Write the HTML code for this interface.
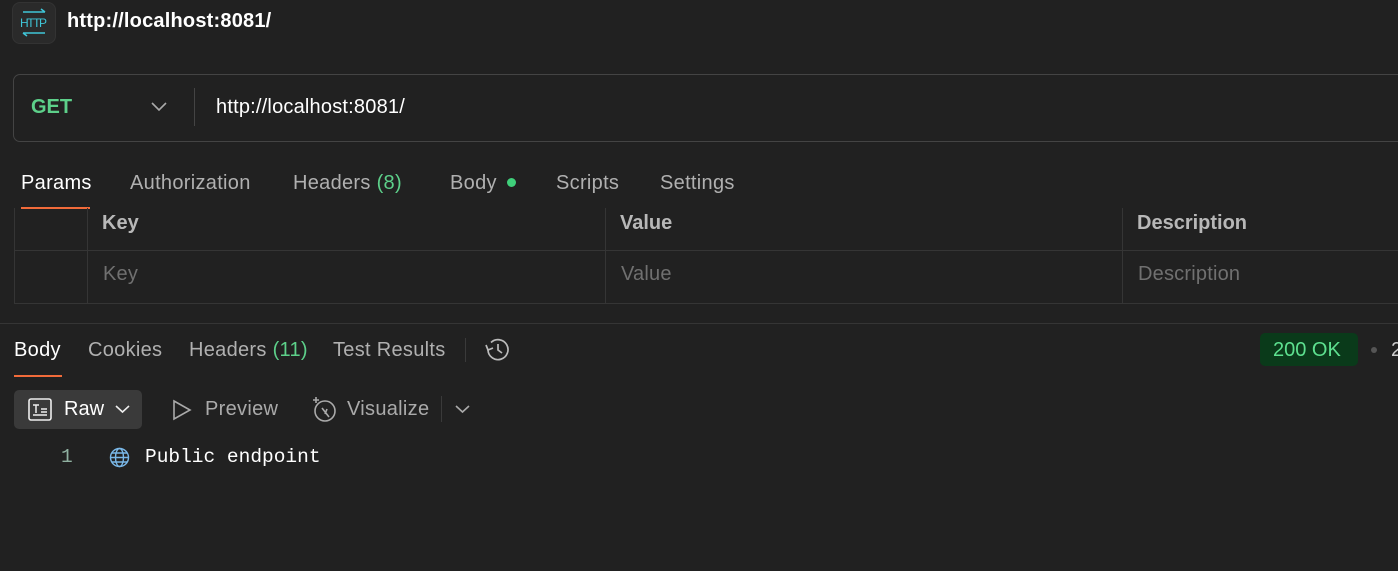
<!DOCTYPE html>
<html><head><style>
body{margin:0;width:1398px;height:571px;background:#212121;font-family:"Liberation Sans",sans-serif;color:#e8e8e8;position:relative;overflow:hidden}
.a{position:absolute;white-space:nowrap}
.tab{font-size:20px;letter-spacing:0.3px;color:#b0b0b0;top:172px}
.tab2{font-size:20px;letter-spacing:0.3px;color:#b0b0b0;top:339px}
.line{position:absolute;background:#353535}
</style></head><body>
<div class="a" style="left:12px;top:2px;width:42px;height:40px;border-radius:8px;background:#2a2a2a;border:1px solid #333"></div>
<svg class="a" style="left:18px;top:8px" width="32" height="30" viewBox="0 0 32 30"><g stroke="#3fc6d8" stroke-width="1.5" fill="none"><path d="M5 4H27M23 1L27 4"/><path d="M5 25H27M5 25L9 28"/></g><text x="2" y="19" font-size="12" fill="#3fc6d8" font-family="Liberation Sans" textLength="27">HTTP</text></svg>
<div class="a" style="left:67px;top:10px;font-size:20px;letter-spacing:0.2px;font-weight:bold;color:#fff">http://localhost:8081/</div>
<div class="a" style="left:13px;top:74px;width:1400px;height:66px;border:1px solid #444;border-radius:7px"></div>
<div class="a" style="left:31px;top:96px;font-size:20px;font-weight:bold;color:#5dd08a">GET</div>
<svg class="a" style="left:151px;top:102px" width="16" height="10"><path d="M1 1L8 8L15 1" stroke="#aaa" stroke-width="1.6" fill="none"/></svg>
<div class="line" style="left:194px;top:88px;width:1px;height:38px;background:#444"></div>
<div class="a" style="left:216px;top:96px;font-size:20px;letter-spacing:0.2px;color:#fff">http://localhost:8081/</div>
<div class="a tab" style="left:21px;color:#fff">Params</div>
<div class="line" style="left:21px;top:207px;width:69px;height:2px;background:#f26b3a"></div>
<div class="a tab" style="left:130px">Authorization</div>
<div class="a tab" style="left:293px">Headers <span style="color:#5dd08a">(8)</span></div>
<div class="a tab" style="left:450px">Body</div>
<div class="a" style="left:507px;top:178px;width:9px;height:9px;border-radius:50%;background:#3fcf7a"></div>
<div class="a tab" style="left:556px">Scripts</div>
<div class="a tab" style="left:660px">Settings</div>
<div class="line" style="left:14px;top:208px;width:1px;height:96px"></div>
<div class="line" style="left:87px;top:208px;width:1px;height:96px"></div>
<div class="line" style="left:605px;top:208px;width:1px;height:96px"></div>
<div class="line" style="left:1122px;top:208px;width:1px;height:96px"></div>
<div class="line" style="left:14px;top:250px;width:1384px;height:1px"></div>
<div class="line" style="left:14px;top:303px;width:1384px;height:1px"></div>
<div class="line" style="left:0;top:323px;width:1398px;height:1px"></div>
<div class="a" style="left:102px;top:212px;font-size:20px;font-weight:bold;color:#b8b8b8">Key</div>
<div class="a" style="left:620px;top:212px;font-size:20px;font-weight:bold;color:#b8b8b8">Value</div>
<div class="a" style="left:1137px;top:212px;font-size:20px;font-weight:bold;color:#b8b8b8">Description</div>
<div class="a" style="left:103px;top:263px;font-size:20px;letter-spacing:0.2px;color:#707070">Key</div>
<div class="a" style="left:621px;top:263px;font-size:20px;letter-spacing:0.2px;color:#707070">Value</div>
<div class="a" style="left:1138px;top:263px;font-size:20px;letter-spacing:0.2px;color:#707070">Description</div>
<div class="a tab2" style="left:14px;color:#fff">Body</div>
<div class="line" style="left:14px;top:375px;width:48px;height:2px;background:#f26b3a"></div>
<div class="a tab2" style="left:88px">Cookies</div>
<div class="a tab2" style="left:189px">Headers <span style="color:#5dd08a">(11)</span></div>
<div class="a tab2" style="left:333px">Test Results</div>
<div class="line" style="left:465px;top:338px;width:1px;height:24px;background:#3a3a3a"></div>
<svg class="a" style="left:484px;top:337px" width="28" height="26" viewBox="0 0 28 26"><g stroke="#bbb" stroke-width="1.7" fill="none"><path d="M4 13A10 10 0 1 0 7 5.5"/><path d="M2 8L4 13L9 11"/><path d="M14 7V13L18 16"/></g></svg>
<div class="a" style="left:1260px;top:333px;width:98px;height:33px;border-radius:5px;background:#0a3a1a"></div>
<div class="a" style="left:1273px;top:339px;font-size:20px;color:#5de08f">200 OK</div>
<div class="a" style="left:1371px;top:347px;width:6px;height:6px;border-radius:50%;background:#555"></div>
<div class="a" style="left:1391px;top:339px;font-size:20px;color:#ccc">2</div>
<div class="a" style="left:14px;top:390px;width:128px;height:39px;border-radius:5px;background:#3a3a3a"></div>
<svg class="a" style="left:28px;top:398px" width="25" height="24"><rect x="1" y="1" width="22" height="21" rx="2" stroke="#eee" stroke-width="1.6" fill="none"/><path d="M5 7H11M8 7V15M5 17H19M13 11H19M13 14H19" stroke="#eee" stroke-width="1.5"/></svg>
<div class="a" style="left:64px;top:398px;font-size:20px;color:#fff">Raw</div>
<svg class="a" style="left:115px;top:405px" width="15" height="10"><path d="M1 1L7.5 7L14 1" stroke="#eee" stroke-width="1.6" fill="none"/></svg>
<svg class="a" style="left:172px;top:399px" width="20" height="22"><path d="M2 2L18 11L2 20Z" stroke="#aaa" stroke-width="1.6" fill="none"/></svg>
<div class="a" style="left:205px;top:398px;font-size:20px;letter-spacing:0.3px;color:#aaa">Preview</div>
<svg class="a" style="left:310px;top:396px" width="28" height="27"><g stroke="#aaa" stroke-width="1.6" fill="none"><circle cx="15" cy="15" r="10"/><path d="M12 12L19 21M17 13L15 18"/><path d="M6 1V7M3 4H9"/></g></svg>
<div class="a" style="left:347px;top:398px;font-size:20px;letter-spacing:0.3px;color:#aaa">Visualize</div>
<div class="line" style="left:441px;top:396px;width:1px;height:26px;background:#3a3a3a"></div>
<svg class="a" style="left:455px;top:405px" width="15" height="10"><path d="M1 1L7.5 7L14 1" stroke="#aaa" stroke-width="1.6" fill="none"/></svg>
<div class="a" style="left:61px;top:446px;font-size:19.5px;font-family:'Liberation Mono',monospace;color:#8fb0a0">1</div>
<svg class="a" style="left:109px;top:447px" width="21" height="21" viewBox="0 0 21 21"><g stroke="#7ab8e8" stroke-width="1.4" fill="none"><circle cx="10.5" cy="10.5" r="9"/><ellipse cx="10.5" cy="10.5" rx="4" ry="9"/><path d="M1.5 10.5H19.5M3 6H18M3 15H18"/></g></svg>
<div class="a" style="left:145px;top:446px;font-size:19.5px;font-family:'Liberation Mono',monospace;color:#fff">Public endpoint</div>
</body></html>
